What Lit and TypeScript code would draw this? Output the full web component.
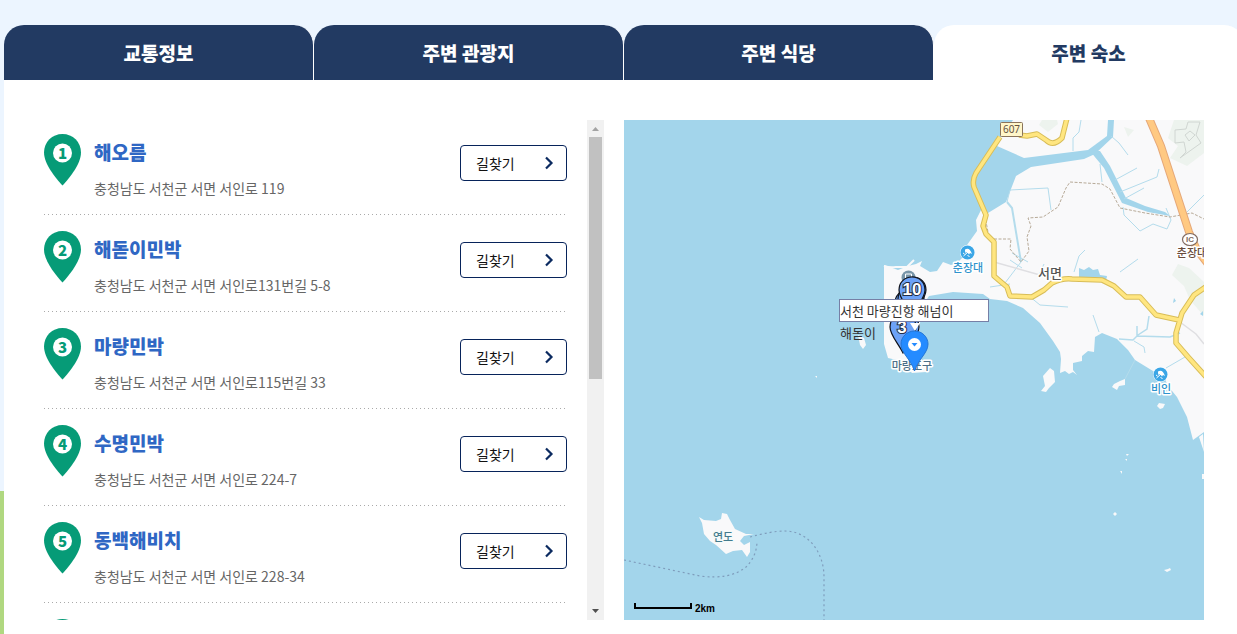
import { LitElement, html, svg, css } from "lit";
import { customElement, state } from "lit/decorators.js";

interface Stay {
  name: string;
  address: string;
}

const TABS = ["교통정보", "주변 관광지", "주변 식당", "주변 숙소"];

const STAYS: Stay[] = [
  { name: "해오름", address: "충청남도 서천군 서면 서인로 119" },
  { name: "해돋이민박", address: "충청남도 서천군 서면 서인로131번길 5-8" },
  { name: "마량민박", address: "충청남도 서천군 서면 서인로115번길 33" },
  { name: "수명민박", address: "충청남도 서천군 서면 서인로 224-7" },
  { name: "동백해비치", address: "충청남도 서천군 서면 서인로 228-34" },
];

const ROADS =
  "M1000 137L976 173Q972 180 974 187L986 215L983 226L986 234L994 242L994 276L1001 282L1007 287L1010 296L1032 297L1044 290L1052 283Q1062 278 1072 279L1102 280L1114 286L1126 297L1140 297L1156 315L1179 320M1207 286L1194 295L1182 313L1176 333V343L1189 358L1207 378M1019 135L1027 136L1037 134L1046 140Q1053 147 1062 138L1067 118";

@customElement("stay-pin")
export class StayPin extends LitElement {
  static properties = { label: { type: String } };
  declare label: string;

  static styles = css`
    :host {
      display: block;
      width: 37px;
      height: 52px;
    }
    .pin {
      display: block;
    }
    .digit {
      font: 900 15px "Noto Sans CJK KR", sans-serif;
      fill: #069b77;
      text-anchor: middle;
    }
  `;

  render() {
    return html`<svg class="pin" width="37" height="52" viewBox="0 0 37 52" aria-hidden="true">
      <path
        d="M18.500 0C28.800 0 37 8 37 18.500C37 29.500 26 43.500 18.500 51.500C11 43.500 0 29.500 0 18.500C0 8 8.200 0 18.500 0Z"
        fill="#069b77"
      />
      <circle cx="18.500" cy="19" r="9.500" fill="#fff" />
      <text class="digit" x="18.500" y="25">${this.label}</text>
    </svg>`;
  }
}

@customElement("coast-map")
export class CoastMap extends LitElement {
  static styles = css`
    :host {
      display: block;
      position: relative;
      height: 500px;
      overflow: hidden;
      background: #a3d5eb;
    }
    .chart {
      display: block;
      width: 100%;
      height: 100%;
    }
    .place {
      font: 500 12px "Noto Sans CJK KR", sans-serif;
      text-anchor: middle;
      paint-order: stroke;
      stroke: #fff;
      stroke-width: 3px;
      stroke-linejoin: round;
    }
    .small {
      font-size: 11px;
    }
    .town {
      fill: #555;
      font-size: 13px;
    }
    .beach {
      fill: #2f93cd;
    }
    .port {
      fill: #4e7088;
    }
    .isle {
      fill: #437a8d;
      stroke-width: 2px;
      stroke: #f4faf8;
    }
    .gate {
      fill: #694b3b;
    }
    .badge {
      font: 10px "Noto Sans", sans-serif;
      fill: #65513d;
      text-anchor: middle;
    }
    .ic {
      font: bold 8px "Liberation Sans", sans-serif;
      fill: #806a60;
      text-anchor: middle;
    }
    .number {
      font: bold 17px "Liberation Sans", sans-serif;
      fill: #fff;
      stroke: #222c44;
      stroke-width: 2px;
      paint-order: stroke;
      text-anchor: middle;
    }
    .scale {
      font: bold 10px "Liberation Sans", sans-serif;
      fill: #000;
    }
    .info {
      position: absolute;
      left: 215px;
      top: 179px;
      box-sizing: border-box;
      width: 150px;
      height: 23px;
      border: 1px solid #767fa6;
      background: #fff;
      color: #333;
      font: 13px/22px "Noto Sans CJK KR", sans-serif;
      word-break: keep-all;
    }
  `;

  private beach(x: number, y: number) {
    return svg`<g transform="translate(${x} ${y})">
      <circle r="7.500" fill="#fff" />
      <circle r="7" fill="#3ba6e6" />
      <path d="M-2.500 -3Q2 -5.500 4.500 1.500L2.500 .5L1.500 2L-.5 -.5L-2 .5L-2.500 -1.500Z" fill="#fff" />
      <path d="M.5 -.5L-4 3.500M-4.500 .5L-3 1.500M0 3L2 4" stroke="#fff" stroke-width="1" />
    </g>`;
  }

  private marker(x: number, y: number) {
    return svg`<path
      transform="translate(${x} ${y})"
      d="M0 -13C8 -13 13 -7 13 0C13 8 5 16 0 26C-5 16 -13 8 -13 0C-13 -7 -8 -13 0 -13Z"
      fill="#6ca2f7" stroke="#10131c" stroke-width="1.200" />`;
  }

  render() {
    return html`
      <svg class="chart" viewBox="624 120 580 500" preserveAspectRatio="xMidYMid slice" role="img" aria-label="서면">
        <g fill="#f9f9fa">
          <path d="M1013 120L1001 137L997 146L1024 158L1088 150L1107 136L1108 120Z" />
          <path
            d="M1114 120L1113 137L1095 154L1084 159L1031 167L1016 176L1006 202L988 213L982 208L976 220L977 231L967 245L963 257L957 263L951 265L943 262L937 271L930 272L920 266L922 261L916 264L908 266L898 270L884 265L884 344L888 358L897 360L900 370L908 369L912 373L926 372L930 367L917 358L920 323L923 305L929 296L953 292L983 294L990 299L1007 301L1023 308L1040 323L1053 341L1060 352L1061 359L1060 373L1065 371L1069 374L1073 372L1077 375L1073 370L1073 363L1082 361L1082 356L1088 351L1094 352L1095 337L1102 333L1117 339L1128 350L1135 360L1153 371L1164 377L1168 386L1177 397L1187 417L1193 440L1204 432V120Z"
          />
          <path d="M1199 437L1203 434L1204 452Z" />
          <path d="M1202 474H1204V479H1202Z" />
          <path d="M858 335L864 338L866 345L863 349L860 345Z" />
          <path d="M1050 368L1054 371L1055 382L1049 388L1046 392L1041 391L1045 386L1043 376Z" />
          <path d="M1114 384L1120 381L1125 379L1125 385L1119 386L1117 390L1112 387Z" />
          <path d="M1159 403L1165 404L1163 408L1160 409L1157 406Z" />
          <path
            d="M699 517L704 520L716 521L721 519L722 513L727 514L730 520L735 529L746 534L754 534L744 536L740 541L744 545L750 542L750 552L747 557L742 550L733 551L726 554L716 545L710 541L704 534L702 523Z"
          />
          <path d="M1126 454h3l-2 2zM1125 459h2v2zM1120 471h2v3zM1113 514l2-2l2 2l-2 2zM1164 570l4-1l2-1l1 2l-4 2zM815 376h2v2z" />
        </g>
        <path d="M884 266Q890 268 896 267L907 267L914 260" fill="none" stroke="#f9f9fa" stroke-width="2" />
        <g fill="#edf3ee">
          <path d="M1042 120L1057 120L1058 124L1048 132L1039 125Z" />
          <path d="M1174 120H1204V153L1187 166L1170 158L1178 146L1168 138Z" />
          <path d="M1124 127L1134 130L1128 137Z" />
          <path d="M1178 264L1189 268L1204 282V316L1190 300L1184 286L1172 275Z" />
        </g>
        <path
          d="M1188 122L1186 129L1175 130L1175 143L1184 142L1186 152L1180 158L1201 143L1196 135L1200 122ZM1185 135L1190 131L1195 135L1189 141Z"
          fill="none" stroke="#d0d6d2"
        />
        <g fill="#a3d5eb">
          <path d="M1090 151L1100 151L1110 166L1126 198L1145 206L1165 212L1170 216L1148 212L1122 203L1104 168Z" />
          <path d="M1079 268L1084 270L1089 267L1093 270L1098 269L1100 275L1107 276L1106 281L1079 277Z" />
          <path d="M1174 298l2 3l-3 2zM1200 314l3-3v5z" />
        </g>
        <g fill="none" stroke="#b4dcec" stroke-width="1">
          <path d="M1081 120L1079 132L1073 138V151M1111 136L1119 143L1128 155M1115 180L1137 168M1120 192L1157 177L1159 169M1124 199L1144 188M1100 164L1102 182" />
          <path d="M1007 202L1010 190L1048 188L1051 210M1021 262L1005 283M1012 253L1028 262M1010 260L1022 268" />
          <path d="M1007 202L1012 208L1021 262" stroke-width="2" />
          <path d="M1123 207L1124 215L1140 231L1153 224L1167 229L1171 220L1166 208M1187 212L1204 195" />
          <path d="M1038 277L1044 264M1074 272L1079 256L1085 250M1120 272L1138 259M990 287L1010 284M1029 296L1040 305L1068 307" />
          <path d="M1119 339L1133 340L1138 335L1147 329L1149 316M1137 326V336L1170 337L1180 333" stroke-width="1.500" />
          <path d="M1134 341L1144 347L1145 353M1135 360L1125 379M1093 315L1099 332M1166 368L1185 357" />
        </g>
        <g fill="none" stroke="#b7aa98" stroke-dasharray="3 1.500">
          <path d="M994 239L1011 239L1010 249L1021 262L1029 251L1027 237L1031 226L1028 218L1043 217L1058 207L1066 188L1070 182L1102 184L1110 189L1120 208L1145 213L1170 217L1192 213L1204 219" />
          <path d="M984 211L988 232" />
        </g>
        <path d="M994 262L1040 275L1062 280M1180 322L1196 334L1204 344" fill="none" stroke="#dfdfe2" stroke-width="1.500" />
        <g fill="none" stroke-linejoin="round">
          <path d="M1149 118L1161 146L1189 232L1197 250L1208 264" stroke="#e5a778" stroke-width="8" />
          <path d="M1149 118L1161 146L1189 232L1197 250L1208 264" stroke="#ffc982" stroke-width="6" />
          <path d=${ROADS} stroke="#d8bd58" stroke-width="5.500" />
          <path d=${ROADS} stroke="#ffe680" stroke-width="3.500" />
        </g>
        <path
          d="M624 560L700 576Q730 580 746 567Q757 556 757 541M750 537Q772 531 785 531C808 531 824 552 824 577V620"
          fill="none" stroke="#7f9dbc" stroke-width="1.200" stroke-dasharray="2 3"
        />

        <rect x="1000.500" y="122.500" width="22" height="14" rx="1" fill="#fff6c9" stroke="#8a745a" />
        <text class="badge" x="1011.500" y="133">607</text>
        <ellipse cx="1190" cy="239.500" rx="7.500" ry="6" fill="#fff" stroke="#806a60" stroke-width="1.200" />
        <text class="ic" x="1190" y="242">IC</text>
        <text class="place gate small" x="1192" y="257">춘장대</text>
        ${this.beach(967.5, 252.5)} ${this.beach(1160.5, 374.5)}
        <text class="place beach small" x="968" y="272">춘장대</text>
        <text class="place beach small" x="1161" y="393">비인</text>
        <text class="place town" x="1050" y="278">서면</text>
        <text class="place isle small" x="723" y="541">연도</text>

        <circle cx="908.500" cy="277.500" r="7" fill="#7895a8" />
        <path d="M905.500 274H911.500V279H905.500ZM905 281H912" fill="none" stroke="#fff" />
        ${this.marker(908, 303)} ${this.marker(911, 299)} ${this.marker(913, 290)} ${this.marker(912, 290)}
        ${this.marker(906, 327)} ${this.marker(903, 327)}
        <text class="number" x="912" y="295">10</text>
        <text class="number" x="902" y="333">3</text>
        <text class="place port small" x="912" y="370">마량포구</text>
        <path d="M910 323H920L915 331Z" fill="#fff" />
        <path
          d="M914.500 331C922 331 928 337 928 344C928 353 919 358 914.500 371C910 358 901 353 901 344C901 337 907 331 914.500 331Z"
          fill="#258bff" stroke="#2375d5"
        />
        <circle cx="914.500" cy="344.500" r="6.500" fill="#fff" />
        <path d="M911.500 343H917.500L914.500 346.500Z" fill="#258bff" />

        <path d="M635 603V608H691V603" fill="none" stroke="#000" stroke-width="2" />
        <text class="scale" x="695" y="612">2km</text>
      </svg>
      <div class="info">서천 마량진항 해넘이 해돋이</div>
    `;
  }
}

@customElement("app-root")
export class AppRoot extends LitElement {
  @state() private active = 3;

  static styles = css`
    :host {
      display: flex;
      flex-direction: column;
      box-sizing: border-box;
      min-height: 100vh;
      padding: 25px 0 0 4px;
      overflow: hidden;
      background: linear-gradient(#ecf5ff 491px, #b0d880 491px);
      font-family: "Noto Sans CJK KR", sans-serif;
    }
    .tabs,
    .panel {
      margin-right: -7px;
    }
    .tabs {
      display: grid;
      grid-template-columns: repeat(4, 1fr);
    }
    .tab {
      height: 55px;
      padding: 0;
      border: 0;
      border-right: 1px solid #fff;
      border-radius: 20px 20px 0 0;
      background: #223a62;
      color: #fff;
      font: 900 19px/28px "Noto Sans CJK KR", sans-serif;
      cursor: pointer;
    }
    .tab.active {
      background: #fff;
      color: #223a62;
    }
    .panel {
      flex: 1;
      display: grid;
      grid-template-columns: 560fr 580fr;
      gap: 20px;
      align-items: start;
      padding: 40px 40px 14px;
      background: #fff;
    }
    .browser {
      display: flex;
      gap: 20px;
      height: 500px;
    }
    .stays {
      flex: 1;
      box-sizing: border-box;
      height: 100%;
      margin: 0;
      padding: 0;
      overflow-y: auto;
      scrollbar-width: none;
      list-style: none;
    }
    .stay {
      display: flex;
      align-items: flex-start;
      gap: 13px;
      padding: 17px 0 15px;
    }
    .stay:first-child {
      padding-top: 14px;
    }
    .stay + .stay {
      background: repeating-linear-gradient(90deg, #aaa 0 1px, transparent 1px 4px) top / 100% 1px no-repeat;
    }
    .about {
      flex: 1;
      height: 65px;
    }
    .name {
      margin: 4px 0 12px;
      color: #2f67c4;
      font-size: 19px;
      font-weight: 900;
      line-height: 28px;
    }
    .address {
      margin: 0;
      color: #666;
      font-size: 14px;
      line-height: 20px;
    }
    .route {
      display: flex;
      align-items: center;
      justify-content: space-between;
      box-sizing: border-box;
      width: 107px;
      height: 36px;
      margin-top: 11px;
      padding: 0 12px 0 15px;
      border: 1px solid #07235a;
      border-radius: 4px;
      color: #111;
      font-size: 14px;
      text-decoration: none;
    }
    .bar {
      display: flex;
      flex-direction: column;
      width: 17px;
      background: #f1f1f1;
    }
    .arrow {
      flex: none;
      display: block;
    }
    .track {
      flex: 1;
      padding: 0 2px;
    }
    .thumb {
      height: 52%;
      background: #c1c1c1;
    }
  `;

  render() {
    return html`
      <div class="tabs" role="tablist">
        ${TABS.map(
          (tab, i) => html`<button
            class="tab ${i === this.active ? "active" : ""}"
            type="button"
            role="tab"
            aria-selected=${i === this.active}
            @click=${() => (this.active = i)}
          >
            ${tab}
          </button>`
        )}
      </div>
      <div class="panel" role="tabpanel">
        <div class="browser">
          <ol class="stays">
            ${STAYS.map(
              (stay, i) => html`<li class="stay">
                <stay-pin label=${i + 1}></stay-pin>
                <div class="about">
                  <h3 class="name">${stay.name}</h3>
                  <p class="address">${stay.address}</p>
                </div>
                <a class="route" href="#">
                  길찾기
                  <svg width="10" height="14" viewBox="0 0 10 14" aria-hidden="true">
                    <path d="M2 1.500L7.500 7L2 12.500" fill="none" stroke="#0b2a60" stroke-width="2.200" />
                  </svg>
                </a>
              </li>`
            )}
            <li class="stay"><stay-pin></stay-pin></li>
          </ol>
          <div class="bar" aria-hidden="true">
            <svg class="arrow" width="17" height="17" viewBox="0 0 17 17"><path d="M5 11L8.500 7L12 11Z" fill="#a3a3a3" /></svg>
            <div class="track"><div class="thumb"></div></div>
            <svg class="arrow" width="17" height="17" viewBox="0 0 17 17"><path d="M5 6L8.500 10L12 6Z" fill="#505050" /></svg>
          </div>
        </div>
        <coast-map></coast-map>
      </div>
    `;
  }
}
